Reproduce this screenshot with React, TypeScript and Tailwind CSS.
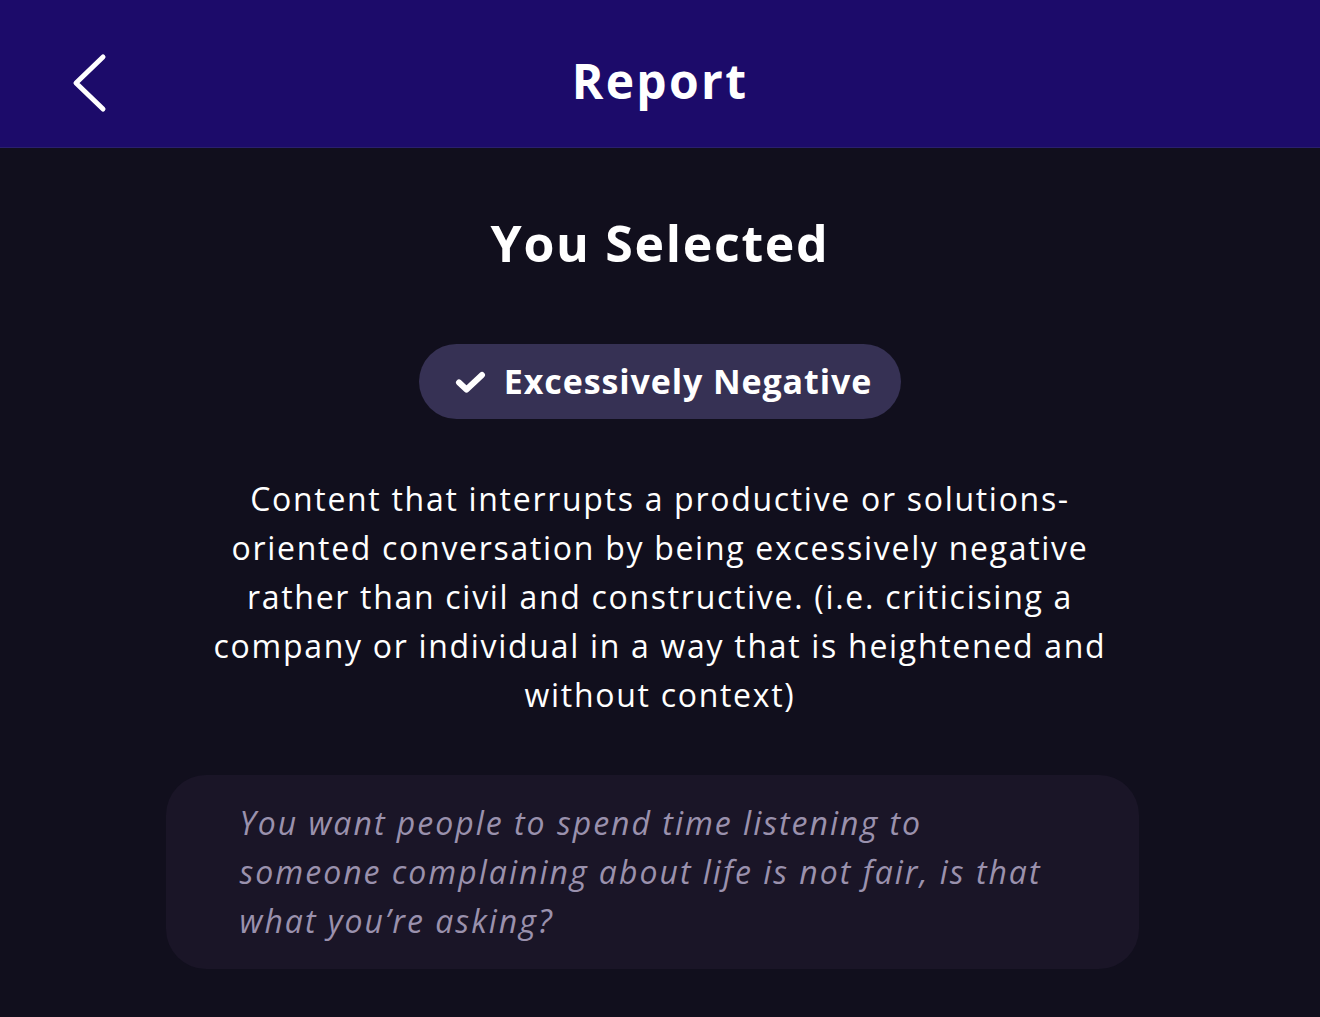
import React from "react";

const font = { fontFamily: "'Open Sans', Lato, sans-serif" };

export default function App() {
  return (
    <div className="min-h-[1017px] w-full bg-[#110f1d] text-white" style={font}>
      <header className="relative flex h-[148px] items-center justify-center border-b border-[#2a1f6e] bg-[#1c0b6a]">
        <button className="absolute left-[70px] top-[54px] flex h-[58px] w-[40px] items-center justify-center">
          <svg width="40" height="60" viewBox="0 0 40 60" fill="none">
            <path d="M33 4 L6 30 L33 56" stroke="white" strokeWidth="5" strokeLinecap="round" strokeLinejoin="round" />
          </svg>
        </button>
        <h1 className="pt-[14px] text-[48px] font-bold tracking-[2.3px]">Report</h1>
      </header>

      <main className="flex flex-col items-center">
        <h2 className="mt-[60px] text-[50px] font-bold leading-[70px] tracking-[1.7px]">You Selected</h2>

        <div className="mt-[66px] flex h-[75px] items-center gap-[18px] rounded-full bg-[#363154] pl-[36px] pr-[29px]">
          <svg width="31" height="24" viewBox="0 0 31 24" fill="none">
            <path d="M4 12.5 L11.5 19.5 L27 5" stroke="white" strokeWidth="6" strokeLinecap="round" strokeLinejoin="round" />
          </svg>
          <span className="text-[34px] font-bold tracking-[0.9px]">Excessively Negative</span>
        </div>

        <p className="mt-[55px] w-[960px] text-center text-[32px] leading-[49px] tracking-[1.7px]">
          Content that interrupts a productive or solutions-
          <br />
          oriented conversation by being excessively negative
          <br />
          rather than civil and constructive. (i.e. criticising a
          <br />
          company or individual in a way that is heightened and
          <br />
          without context)
        </p>

        <div className="ml-[-16px] mt-[56px] w-[973px] rounded-[40px] bg-[#1a1527] pb-[24px] pl-[74px] pr-[20px] pt-[23px]">
          <p className="text-[32px] italic leading-[49px] tracking-[2px] text-[#9a91ad]">
            You want people to spend time listening to
            <br />
            someone complaining about life is not fair, is that
            <br />
            what you’re asking?
          </p>
        </div>
      </main>
    </div>
  );
}
